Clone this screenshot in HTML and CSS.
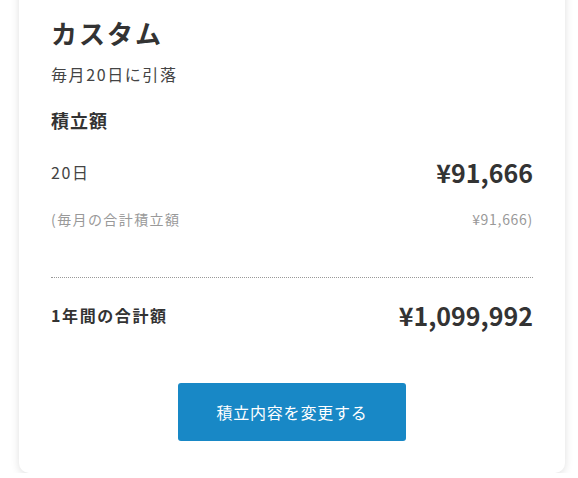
FILE: index.html
```html
<!DOCTYPE html>
<html lang="ja">
<head>
    <meta charset="UTF-8">
    <meta name="viewport" content="width=device-width, initial-scale=1.0">
    <title>積立内容</title>
    <link rel="stylesheet" href="styles.css">
</head>
<body>
    <div class="page">
        <div class="card">
            <h1 class="plan-name">カスタム</h1>
            <p class="plan-note">毎月20日に引落</p>
            <h2 class="section-title">積立額</h2>
            <div class="row row-main">
                <span class="row-label">20日</span>
                <span class="amount">¥91,666</span>
            </div>
            <div class="row row-sub">
                <span>(毎月の合計積立額</span>
                <span>¥91,666)</span>
            </div>
            <div class="divider"></div>
            <div class="row row-total">
                <span class="total-label">1年間の合計額</span>
                <span class="amount">¥1,099,992</span>
            </div>
            <div class="actions">
                <button class="change-button">積立内容を変更する</button>
            </div>
        </div>
    </div>
</body>
</html>
```

FILE: styles.css
```css
body {
    margin: 0;
    padding: 0;
    background: #fff;
    font-family: "Noto Sans CJK JP", "Noto Sans", sans-serif;
    color: #333;
    overflow: hidden;
}

.page {
    padding: 0 13px 0 19px;
}

.card {
    margin-top: -20px;
    background: #fff;
    border-radius: 10px;
    box-shadow: 0 2px 8px rgba(0, 0, 0, 0.13);
    padding: 35px 32px 32px;
}

.plan-name {
    margin: 0;
    font-size: 26px;
    line-height: 36px;
    font-weight: bold;
    letter-spacing: 2px;
}

.plan-note {
    margin: 11px 0 0;
    font-size: 16px;
    line-height: 24px;
    letter-spacing: 0.1em;
    color: #444;
}

.section-title {
    margin: 21px 0 0;
    font-size: 18px;
    line-height: 26px;
    font-weight: bold;
    letter-spacing: 1px;
}

.row {
    display: flex;
    justify-content: space-between;
    align-items: center;
}

.row-main {
    margin-top: 21px;
    height: 36px;
    font-size: 16px;
    letter-spacing: 0.1em;
    color: #444;
}

.amount {
    font-size: 25px;
    font-weight: bold;
    letter-spacing: 0;
    color: #333;
}

.row-sub {
    margin-top: 18px;
    height: 22px;
    font-size: 14px;
    color: #999;
    letter-spacing: 0.1em;
}

.row-sub span:last-child {
    letter-spacing: 0.05em;
}

.divider {
    margin-top: 47px;
    border-top: 1px dotted #999;
}

.row-total {
    margin-top: 19px;
    height: 36px;
}

.total-label {
    font-size: 16px;
    font-weight: bold;
    letter-spacing: 0.1em;
}

.actions {
    margin-top: 50px;
    display: flex;
    justify-content: center;
}

.change-button {
    width: 228px;
    height: 58px;
    background-color: #1888c6;
    color: #fff;
    border: none;
    border-radius: 3px;
    font-family: inherit;
    font-size: 16px;
    letter-spacing: 0.05em;
    cursor: pointer;
}
```
